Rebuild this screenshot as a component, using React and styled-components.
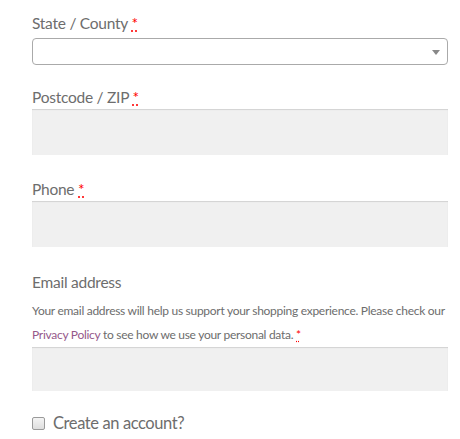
import React from "react";
import styled, { createGlobalStyle } from "styled-components";

const GlobalStyle = createGlobalStyle`
  html, body {
    margin: 0;
    padding: 0;
    background: #ffffff;
  }
  body {
    font-family: Lato, "Liberation Sans", sans-serif;
    color: #6d6d6d;
  }
`;

const Form = styled.form`
  width: 416px;
  padding: 13px 12px 0 32px;
`;

const Field = styled.div`
  margin-bottom: ${(p) => p.$space || 24}px;
`;

const Label = styled.label`
  display: block;
  font-size: 15.5px;
  line-height: 20px;
  letter-spacing: -0.25px;
  color: #6d6d6d;
  margin-bottom: ${(p) => p.$gap ?? 2}px;
`;

const Required = styled.abbr`
  color: red;
  text-decoration: underline dotted red;
  text-underline-offset: 2px;
  cursor: help;
`;

const SelectWrap = styled.div`
  position: relative;
  height: 27px;

  &::after {
    content: "";
    position: absolute;
    right: 8px;
    top: 12px;
    border-style: solid;
    border-width: 5px 4px 0 4px;
    border-color: #888 transparent transparent transparent;
    pointer-events: none;
  }
`;

const Select = styled.select`
  appearance: none;
  width: 100%;
  height: 27px;
  box-sizing: border-box;
  border: 1px solid #aaa;
  border-radius: 4px;
  background: #fff;
  font: inherit;
  outline: none;
`;

const Input = styled.input`
  display: block;
  width: 100%;
  height: ${(p) => p.$h || 46}px;
  box-sizing: border-box;
  border: 0;
  background: #f0f0f0;
  box-shadow: inset 0 1px 1px rgba(0, 0, 0, 0.125);
  font: inherit;
  outline: none;
`;

const Note = styled.p`
  margin: 7px 0 0;
  font-size: 12px;
  line-height: 24px;
  letter-spacing: -0.28px;
  color: #6d6d6d;
  white-space: nowrap;
`;

const Link = styled.a`
  color: #96588a;
  text-decoration: none;
`;

const CheckRow = styled.label`
  display: flex;
  align-items: center;
  gap: 8px;
  font-size: 16.5px;
  line-height: 22px;
  letter-spacing: -0.4px;
  color: #6d6d6d;
  margin-top: -3px;
`;

const Check = styled.input`
  appearance: none;
  width: 13px;
  height: 13px;
  margin: 0;
  box-sizing: border-box;
  border: 1px solid #9a9a9a;
  border-radius: 2px;
  background: linear-gradient(#f4f4f4, #dedede);
`;

const Star = () => <Required title="required">*</Required>;

export default function App() {
  return (
    <>
      <GlobalStyle />
      <Form>
        <Field $space={22}>
          <Label $gap={5}>
            State / County <Star />
          </Label>
          <SelectWrap>
            <Select defaultValue="">
              <option value=""></option>
            </Select>
          </SelectWrap>
        </Field>
        <Field>
          <Label>
            Postcode / ZIP <Star />
          </Label>
          <Input type="text" />
        </Field>
        <Field $space={25}>
          <Label>
            Phone <Star />
          </Label>
          <Input type="tel" />
        </Field>
        <Field>
          <Label $gap={0}>Email address</Label>
          <Note>
            Your email address will help us support your shopping experience. Please check our
            <br />
            <Link href="#">Privacy Policy</Link> to see how we use your personal data. <Star />
          </Note>
          <Input type="email" $h={44} />
        </Field>
        <CheckRow>
          <Check type="checkbox" />
          Create an account?
        </CheckRow>
      </Form>
    </>
  );
}
